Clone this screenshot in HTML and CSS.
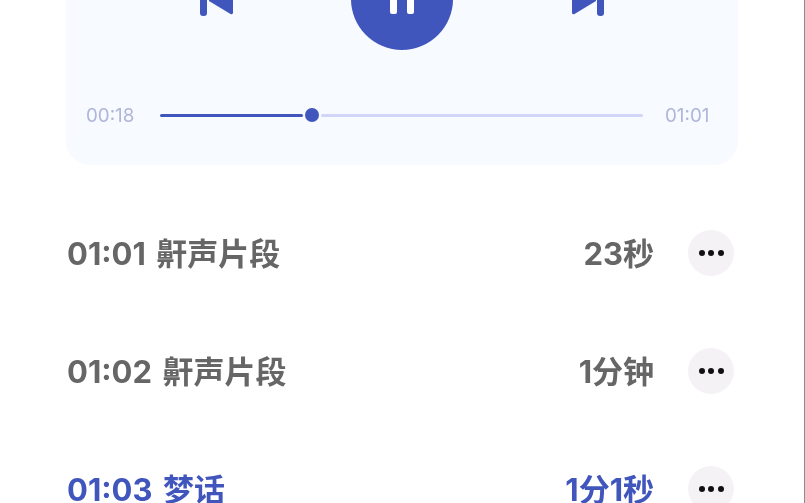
FILE: index.html
```html
<!DOCTYPE html>
<html lang="zh-CN">
<head>
<meta charset="utf-8">
<title>播放列表</title>
<link rel="stylesheet" href="styles.css">
</head>
<body>
<div class="page">
  <section class="player">
    <div class="controls">
      <button class="skip skip-prev" aria-label="上一段">
        <svg width="34" height="32" viewBox="0 0 34 32"><rect x="0" y="0" width="7" height="32" rx="3" fill="#4156bd"/><path d="M33 2 V28.5 Q33 31 30.500 30 L9 17 V15 L30.500 2 Z" fill="#4156bd"/></svg>
      </button>
      <button class="play" aria-label="暂停">
        <span class="pause-bar"></span><span class="pause-bar"></span>
      </button>
      <button class="skip skip-next" aria-label="下一段">
        <svg width="34" height="32" viewBox="0 0 34 32"><rect x="26" y="0" width="7" height="32" rx="3" fill="#4156bd"/><path d="M1 2 V28.5 Q1 31 3.500 30 L25 17 V15 L3.500 2 Z" fill="#4156bd"/></svg>
      </button>
    </div>
    <div class="progress">
      <span class="time">00:18</span>
      <div class="track">
        <span class="played"></span>
        <span class="thumb"></span>
        <span class="rest"></span>
      </div>
      <span class="time">01:01</span>
    </div>
  </section>
  <ul class="list">
    <li class="row">
      <span class="title">01:01 鼾声片段</span>
      <span class="length">23秒</span>
      <button class="more" aria-label="更多"><i></i><i></i><i></i></button>
    </li>
    <li class="row">
      <span class="title">01:02 鼾声片段</span>
      <span class="length">1分钟</span>
      <button class="more" aria-label="更多"><i></i><i></i><i></i></button>
    </li>
    <li class="row active">
      <span class="title">01:03 梦话</span>
      <span class="length">1分1秒</span>
      <button class="more" aria-label="更多"><i></i><i></i><i></i></button>
    </li>
  </ul>
</div>
</body>
</html>
```
FILE: styles.css
```css
* { box-sizing: border-box; }
html, body { margin: 0; height: 100%; background: #fff; overflow: hidden; }
body { font-family: Inter, "Noto Sans CJK SC", sans-serif; }
.page {
  width: 805px;
  height: 503px;
  border-right: 1px solid #8c8c8c;
  padding: 0 66px 0 66px;
  overflow: hidden;
  filter: blur(0.45px);
}
.player {
  height: 165px;
  background: #f7faff;
  border-radius: 0 0 24px 24px;
  padding: 0 0 0 20px;
}
button { border: 0; padding: 0; background: none; }
.controls {
  height: 50px;
  display: flex;
  align-items: flex-end;
  overflow: hidden;
  margin-right: 20px;
  padding-left: 114px;
}
.skip { display: block; height: 32px; margin-bottom: 34px; flex: none; }
.skip svg { display: block; }
.play {
  flex: none;
  width: 102px;
  height: 102px;
  margin-left: 117px;
  margin-right: 118px;
  border-radius: 50%;
  background: #4156bd;
  display: flex;
  justify-content: center;
  gap: 10px;
  padding-top: 36px;
}
.pause-bar { width: 7px; height: 30px; background: #fff; border-radius: 2px; }
.progress {
  display: flex;
  align-items: center;
  height: 20px;
  margin-top: 55px;
}
.time { font-size: 18.8px; color: #b0b6da; width: 49px; flex: none; white-space: nowrap; }
.progress .time:last-child { margin-left: 22px; width: 45px; }
.track { width: 483px; margin-left: 25px; flex: none; display: flex; align-items: center; }
.played { width: 143px; height: 3px; background: #4156bd; border-radius: 2px; }
.thumb { width: 14px; height: 14px; margin-left: 2px; border-radius: 50%; background: #4156bd; }
.rest { flex: 1; margin-left: 2px; height: 3px; background: #d2d5f9; border-radius: 2px; }
.list { list-style: none; margin: 0; padding: 0 4px 0 0; margin-top: 29px; }
.row {
  display: flex;
  align-items: center;
  height: 118px;
  font-size: 31px;
  font-weight: 700;
  color: #666;
}
.title { flex: 1; white-space: nowrap; word-spacing: 3px; padding-left: 1px; }
.title, .length { padding-bottom: 4px; }
.length { margin-right: 34px; white-space: nowrap; }
.more {
  width: 46px;
  height: 46px;
  border-radius: 50%;
  background: #f5f2f6;
  display: flex;
  align-items: center;
  justify-content: center;
  gap: 3.5px;
  flex: none;
  padding-bottom: 1px;
}
.more i { width: 6px; height: 6px; border-radius: 50%; background: #111; }
.active { color: #4156bd; }
```
